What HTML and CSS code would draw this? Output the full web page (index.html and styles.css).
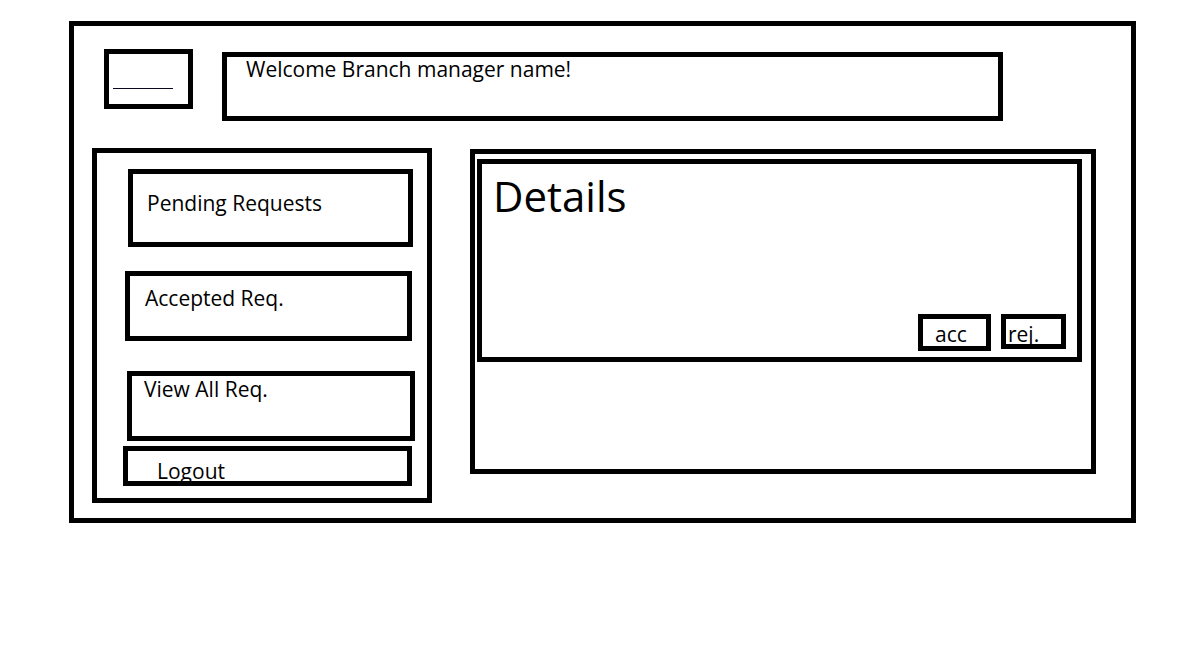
FILE: index.html
```html
<!DOCTYPE html>
<html lang="en">
<head>
<meta charset="UTF-8" />
<meta name="viewport" content="width=device-width, initial-scale=1" />
<title>Branch Manager</title>
<link rel="stylesheet" href="styles.css">
</head>
<body>
<div class="frame">
  <div class="header">
    <div class="logo"><div class="logo-line"></div></div>
    <div class="welcome">Welcome Branch manager name!</div>
  </div>
  <div class="content">
    <div class="sidebar">
      <div class="nav-item pending">Pending Requests</div>
      <div class="nav-item accepted">Accepted Req.</div>
      <div class="nav-item view-all">View All Req.</div>
      <div class="nav-item logout">Logout</div>
    </div>
    <div class="main">
      <div class="details">
        <div class="details-title">Details</div>
        <div class="actions">
          <div class="action acc">acc</div>
          <div class="action rej">rej.</div>
        </div>
      </div>
    </div>
  </div>
</div>
</body>
</html>
```

FILE: styles.css
```css
* {
  box-sizing: border-box;
}

body {
  margin: 0;
  background: #ffffff;
  color: #000000;
  font-family: 'Open Sans', 'Noto Sans', sans-serif;
  font-size: 21px;
  line-height: 24px;
}

.frame {
  margin: 21px 0 0 69px;
  width: 1067px;
  height: 502px;
  border: 5px solid #000;
  display: flex;
  flex-direction: column;
}

.header {
  display: flex;
  align-items: flex-start;
}
.logo {
  margin: 23px 0 0 30px;
  width: 89px;
  height: 60px;
  border: 5px solid #000;
  padding: 34px 0 0 4px;
}
.logo-line {
  width: 60px;
  height: 1px;
  background: #0a0a1e;
}
.welcome {
  margin: 26px 0 0 29px;
  width: 781px;
  height: 69px;
  border: 5px solid #000;
  padding: 0 0 0 19px;
}

.content {
  display: flex;
  align-items: flex-start;
  margin-top: 27px;
}

.sidebar {
  margin-left: 18px;
  width: 340px;
  height: 355px;
  border: 5px solid #000;
  display: flex;
  flex-direction: column;
  align-items: flex-start;
}
.nav-item {
  border: 5px solid #000;
  overflow: hidden;
  white-space: nowrap;
}
.nav-item.pending {
  margin: 16px 0 0 31px;
  width: 285px;
  height: 78px;
  padding: 17px 0 0 14px;
}
.nav-item.accepted {
  margin: 24px 0 0 28px;
  width: 287px;
  height: 70px;
  padding: 10px 0 0 15px;
}
.nav-item.view-all {
  margin: 30px 0 0 30px;
  width: 288px;
  height: 70px;
  padding: 1px 0 0 12px;
}
.nav-item.logout {
  margin: 5px 0 0 26px;
  width: 289px;
  height: 40px;
  padding: 8px 0 0 29px;
}

.main {
  margin: 1px 0 0 38px;
  width: 626px;
  height: 325px;
  border: 5px solid #000;
  padding: 5px 9px 0 2px;
}
.details {
  width: 605px;
  height: 203px;
  border: 5px solid #000;
  display: flex;
  flex-direction: column;
}
.details-title {
  font-size: 42px;
  line-height: 48px;
  padding: 8px 0 0 11px;
}
.actions {
  margin-top: auto;
  margin-bottom: 6px;
  display: flex;
  align-items: flex-start;
  justify-content: flex-end;
  gap: 10px;
  padding-right: 11px;
}
.action {
  border: 5px solid #000;
  white-space: nowrap;
}
.action.acc {
  width: 73px;
  height: 37px;
  padding: 3px 0 0 12px;
}
.action.rej {
  width: 65px;
  height: 35px;
  padding: 3px 0 0 2px;
  margin-bottom: 2px;
}
```
